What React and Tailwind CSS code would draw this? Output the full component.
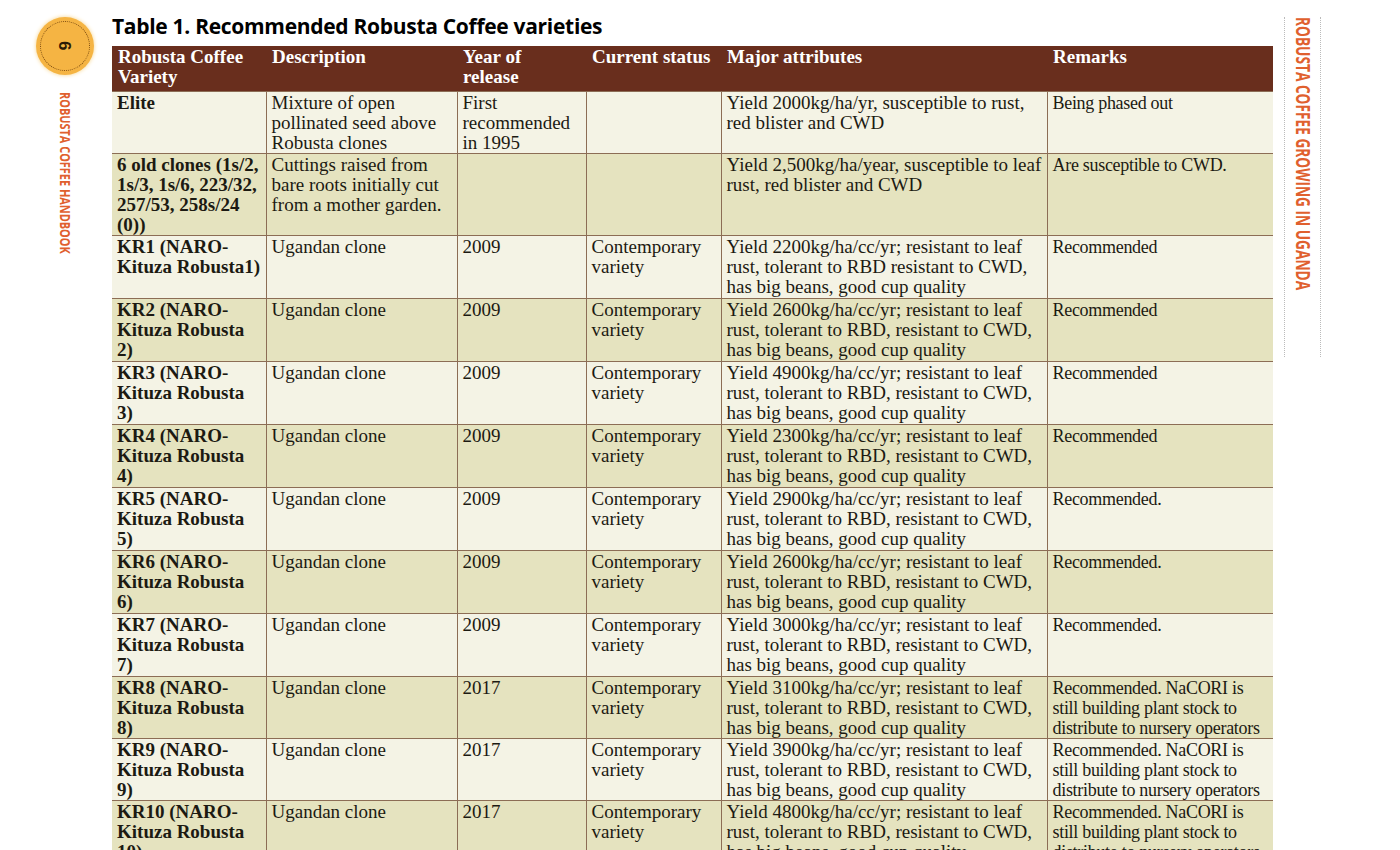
const rows = [
  ["Elite","Mixture of open pollinated seed above Robusta clones","First recommended in 1995","","Yield 2000kg/ha/yr, susceptible to rust, red blister and CWD","Being phased out",62],
  ["6 old clones (1s/2, 1s/3, 1s/6, 223/32, 257/53, 258s/24 (0))","Cuttings raised from bare roots initially cut from a mother garden.","","","Yield 2,500kg/ha/year, susceptible to leaf  rust, red blister and CWD","Are susceptible to CWD.",81],
  ["KR1 (NARO-Kituza Robusta1)","Ugandan clone","2009","Contemporary variety","Yield 2200kg/ha/cc/yr; resistant to leaf rust, tolerant to RBD resistant to CWD, has big beans, good cup quality","Recommended",63],
  ["KR2 (NARO-Kituza Robusta 2)","Ugandan clone","2009","Contemporary variety","Yield 2600kg/ha/cc/yr; resistant to leaf rust, tolerant to RBD, resistant to CWD, has big beans, good cup quality","Recommended",63],
  ["KR3 (NARO-Kituza Robusta 3)","Ugandan clone","2009","Contemporary variety","Yield 4900kg/ha/cc/yr; resistant to leaf rust, tolerant to RBD, resistant to CWD, has big beans, good cup quality","Recommended",63],
  ["KR4 (NARO-Kituza Robusta 4)","Ugandan clone","2009","Contemporary variety","Yield 2300kg/ha/cc/yr; resistant to leaf rust, tolerant to RBD, resistant to CWD, has big beans, good cup quality","Recommended",63],
  ["KR5 (NARO-Kituza Robusta 5)","Ugandan clone","2009","Contemporary variety","Yield 2900kg/ha/cc/yr; resistant to leaf rust, tolerant to RBD, resistant to CWD, has big beans, good cup quality","Recommended.",63],
  ["KR6 (NARO-Kituza Robusta 6)","Ugandan clone","2009","Contemporary variety","Yield 2600kg/ha/cc/yr; resistant to leaf rust, tolerant to RBD, resistant to CWD, has big beans, good cup quality","Recommended.",63],
  ["KR7 (NARO-Kituza Robusta 7)","Ugandan clone","2009","Contemporary variety","Yield 3000kg/ha/cc/yr; resistant to leaf rust, tolerant to RBD, resistant to CWD, has big beans, good cup quality","Recommended.",63],
  ["KR8 (NARO-Kituza Robusta 8)","Ugandan clone","2017","Contemporary variety","Yield 3100kg/ha/cc/yr; resistant to leaf rust, tolerant to RBD, resistant to CWD, has big beans, good cup quality","Recommended. NaCORI is still building plant stock to distribute to nursery operators",62],
  ["KR9 (NARO-Kituza Robusta 9)","Ugandan clone","2017","Contemporary variety","Yield 3900kg/ha/cc/yr; resistant to leaf rust, tolerant to RBD, resistant to CWD, has big beans, good cup quality","Recommended. NaCORI is still building plant stock to distribute to nursery operators",60],
  ["KR10 (NARO-Kituza Robusta 10)","Ugandan clone","2017","Contemporary variety","Yield 4800kg/ha/cc/yr; resistant to leaf rust, tolerant to RBD, resistant to CWD, has big beans, good cup quality","Recommended. NaCORI is still building plant stock to distribute to nursery operators",62],
];
const widths = [154,191,129,135,326,226];
const serif = {fontFamily:'"Liberation Serif", serif'};
const heads = [["Robusta Coffee","Variety"],["Description"],["Year of","release"],["Current status"],["Major attributes"],["Remarks"]];

export default function App(){
  return (
    <div className="w-[1400px] h-[850px] overflow-hidden bg-white flex items-start">
      <div className="w-[112px] shrink-0 flex flex-col items-center pt-[17px] pl-[18px]">
        <div className="w-[58px] h-[58px] rounded-full bg-[#f5b443] shadow-[0_0_4px_#f7d48a] flex items-center justify-center">
          <div className="w-[50px] h-[50px] rounded-full border border-dotted border-[#7a4a10] flex items-center justify-center">
            <span className="rotate-90 font-bold text-[17px] text-[#2a1a05]" style={{fontFamily:'"Liberation Sans", sans-serif'}}>6</span>
          </div>
        </div>
        <div className="mt-[17px] h-[180px] overflow-visible">
          <span className="block whitespace-nowrap [writing-mode:vertical-rl] origin-top scale-y-[0.78] font-bold text-[14px] text-[#e0602e] leading-[16px]" style={{fontFamily:'"Open Sans", sans-serif'}}>ROBUSTA COFFEE HANDBOOK</span>
        </div>
      </div>
      <div className="pt-[12px] shrink-0">
        <div className="text-[21px] font-bold text-black leading-[28px] tracking-[-0.3px]" style={{fontFamily:'"Open Sans", sans-serif'}}>Table 1. Recommended Robusta Coffee varieties</div>
        <table className="mt-[6px] border-collapse table-fixed w-[1161px] text-[19px] leading-[20px] text-[#1c1a12]" style={serif}>
          <colgroup>{widths.map((w,i)=><col key={i} style={{width:w}}/>)}</colgroup>
          <thead>
            <tr className="bg-[#692e1d] text-white h-[45px]">
              {heads.map((h,i)=>(
                <th key={i} className="text-left align-top font-bold px-[6px] pt-[1px]">{h.map((l,j)=><div key={j}>{l}</div>)}</th>
              ))}
            </tr>
          </thead>
          <tbody>
            {rows.map((r,ri)=>(
              <tr key={ri} className={ri%2===0?"bg-[#f4f3e5]":"bg-[#e5e3bf]"} style={{height:r[6]}}>
                {r.slice(0,6).map((c,ci)=>(
                  <td key={ci} className={"align-top px-[5px] pt-[1px] border border-[#8c6d55] "+(ci===0?"font-bold border-l-0":"")+(ci===5?" border-r-0 text-[18px] tracking-[-0.3px]":"")}>{c}</td>
                ))}
              </tr>
            ))}
          </tbody>
        </table>
      </div>
      <div className="ml-[11px] mt-[17px] w-[37px] h-[340px] shrink-0 border-l border-r border-dotted border-[#bbb] flex justify-center">
        <span className="block whitespace-nowrap [writing-mode:vertical-rl] origin-top scale-y-[0.72] font-bold text-[19px] text-[#e0602e] leading-[20px]" style={{fontFamily:'"Open Sans", sans-serif'}}>ROBUSTA COFFEE GROWING IN UGANDA</span>
      </div>
    </div>
  );
}
